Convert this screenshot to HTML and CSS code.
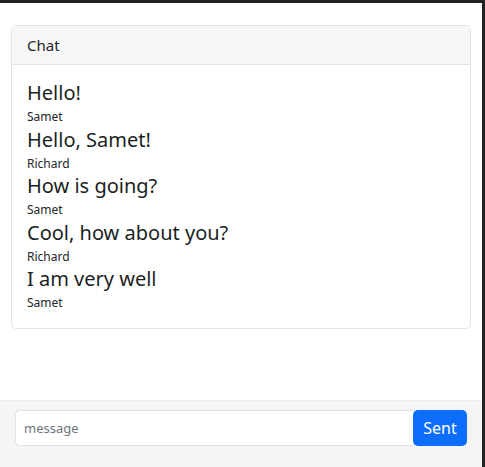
FILE: index.html
```html
<!DOCTYPE html>
<html>
<head>
<meta charset="utf-8">
<link rel="stylesheet" href="styles.css">
</head>
<body>
<div class="frame">
  <main class="main">
    <section class="card">
      <header class="card-header">Chat</header>
      <div class="card-body">
        <div class="msg"><h5 class="msg-text">Hello!</h5><small class="msg-author">Samet</small></div>
        <div class="msg"><h5 class="msg-text">Hello, Samet!</h5><small class="msg-author">Richard</small></div>
        <div class="msg"><h5 class="msg-text">How is going?</h5><small class="msg-author">Samet</small></div>
        <div class="msg"><h5 class="msg-text">Cool, how about you?</h5><small class="msg-author">Richard</small></div>
        <div class="msg"><h5 class="msg-text">I am very well</h5><small class="msg-author">Samet</small></div>
      </div>
    </section>
  </main>
  <footer class="footer">
    <div class="input-group">
      <input class="input" type="text" placeholder="message">
      <button class="btn">Sent</button>
    </div>
  </footer>
</div>
</body>
</html>
```

FILE: styles.css
```css
* { box-sizing: border-box; }
html, body { margin: 0; padding: 0; }
body {
  width: 485px;
  height: 467px;
  background: #222;
  font-family: "Noto Sans", "Open Sans", sans-serif;
  color: #212529;
}
.frame {
  margin-top: 3px;
  width: 482px;
  height: 464px;
  background: #fff;
  display: flex;
  flex-direction: column;
}
.main {
  flex: 1;
  padding: 22px 11px 0 11px;
}
.card {
  border: 1px solid #e3e3e3;
  border-radius: 5px;
  overflow: hidden;
}
.card-header {
  height: 39px;
  background: #f7f7f7;
  border-bottom: 1px solid #e3e3e3;
  padding: 0 15px;
  display: flex;
  align-items: center;
  font-size: 15px;
}
.card-body {
  padding: 16px 15px 14px 15px;
}
.msg {
  display: flex;
  flex-direction: column;
}
.msg-text {
  margin: 0;
  font-size: 20px;
  font-weight: 400;
  line-height: 24px;
  color: #1c1f23;
}
.msg-author {
  font-size: 12px;
  line-height: 20.5px;
  padding-top: 2px;
}
.footer {
  height: 67px;
  background: #f5f5f5;
  border-top: 1px solid #eeeeee;
  padding: 9px 15px 0 15px;
}
.input-group {
  display: flex;
  height: 36px;
}
.input {
  flex: 1;
  border: 1px solid #dee2e6;
  border-right: none;
  border-radius: 5px 0 0 5px;
  padding: 0 8px;
  font-family: inherit;
  font-size: 13px;
  color: #212529;
  background: #fff;
  outline: none;
}
.input::placeholder { color: #6c757d; }
.btn {
  width: 54px;
  border: none;
  border-radius: 5px;
  background: #0d6efd;
  color: #fff;
  font-family: inherit;
  font-size: 16px;
  padding: 0;
  margin-left: -1px;
}
```
